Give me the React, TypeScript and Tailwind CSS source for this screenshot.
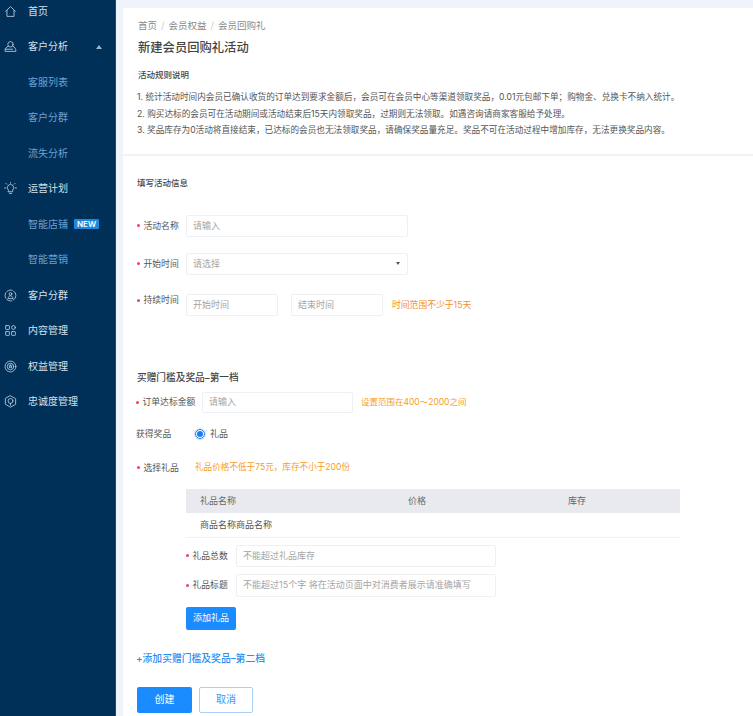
import type { ReactNode } from 'react'

const cjk = "font-['Inter','Noto_Sans_CJK_SC',sans-serif]"

function Icon({ children }: { children: ReactNode }) {
  return (
    <svg viewBox="0 0 24 24" fill="none" stroke="currentColor" strokeWidth="1.6" strokeLinejoin="round" strokeLinecap="round" className="w-[13px] h-[13px] shrink-0">
      {children}
    </svg>
  )
}

const HomeIcon = () => <Icon><path d="M3 11.5 12 3l9 8.5M5.5 10v11h13V10" /></Icon>
const UserIcon = () => <Icon><circle cx="12" cy="8" r="5" /><path d="M7.5 11.5C4 13 2 16 2 21h20c0-5-2-8-5.500-9.500" /><path d="M2 17h14" /></Icon>
const BulbIcon = () => <Icon><path d="M8 15a6 6 0 1 1 8 0v3H8zM10 21h4M12 2v-1M3 11H1M23 11h-2M5 4 3.500 2.500M19 4l1.500-1.500" /></Icon>
const GroupIcon = () => <Icon><circle cx="12" cy="12" r="10" strokeDasharray="10 3" /><circle cx="12" cy="9" r="2.500" /><path d="M7.500 17c.5-3 2.500-4.500 4.500-4.500s4 1.500 4.500 4.500z" /></Icon>
const GridIcon = () => <Icon><rect x="3" y="3" width="7" height="7" rx="1" /><circle cx="17.500" cy="6.500" r="3.500" /><rect x="3" y="14" width="7" height="7" rx="1" /><rect x="14" y="14" width="7" height="7" rx="1" /></Icon>
const StarIcon = () => <Icon><circle cx="12" cy="12" r="10" /><circle cx="12" cy="12" r="6" /><path d="m12 9 1 2h2l-1.500 1.500.5 2-2-1-2 1 .5-2L9 11h2z" /></Icon>
const ShieldIcon = () => <Icon><path d="M12 1.500 21.500 7v10L12 22.500 2.500 17V7z" /><circle cx="12" cy="11" r="4.500" /><path d="M12 15.500V19" /></Icon>

function NavItem({ icon, label, sub, children }: { icon?: ReactNode; label: string; sub?: boolean; children?: ReactNode }) {
  return (
    <div className={`flex items-center h-[35.5px] pl-[4px] text-[10px] ${sub ? 'text-[#6fa0cf]' : 'text-[#d5e1ec]'}`}>
      <span className="w-[24px] flex text-[#b9cbdc]">{icon}</span>
      <span>{label}</span>
      {children}
    </div>
  )
}

function Label({ text, required = true, className = 'w-[49px]' }: { text: string; required?: boolean; className?: string }) {
  return (
    <div className={`flex items-center shrink-0 text-[8.800px] text-[#555] ${className}`}>
      {required && <span className="w-[3px] h-[3px] rounded-full bg-[#f0405c] mr-[3.500px] shrink-0"></span>}
      <span>{text}</span>
    </div>
  )
}

function Field({ text, className, children }: { text: string; className: string; children?: ReactNode }) {
  return (
    <div className={`flex items-center justify-between pl-[6px] pr-[7px] bg-white border border-[#eef0f3] rounded-[2px] text-[#a5a5a5] ${className}`}>
      <span>{text}</span>
      {children}
    </div>
  )
}

const rules = [
  '1. 统计活动时间内会员已确认收货的订单达到要求金额后，会员可在会员中心等渠道领取奖品，0.01元包邮下单；购物金、兑换卡不纳入统计。',
  '2. 购买达标的会员可在活动期间或活动结束后15天内领取奖品，过期则无法领取。如遇咨询请商家客服给予处理。',
  '3. 奖品库存为0活动将直接结束，已达标的会员也无法领取奖品，请确保奖品量充足。奖品不可在活动过程中增加库存，无法更换奖品内容。',
]

export default function App() {
  return (
    <div className={`flex h-[716px] w-[753px] overflow-hidden bg-[#eff4fc] text-[9px] ${cjk}`}>
      {/* sidebar */}
      <aside className="w-[116px] shrink-0 bg-[#003058] border-r border-[#1b4a72]">
        <div className="-mt-[6.500px]">
          <NavItem icon={<HomeIcon />} label="首页" />
          <NavItem icon={<UserIcon />} label="客户分析">
            <span className="ml-[28px] w-0 h-0 border-x-[3px] border-x-transparent border-b-[4px] border-b-[#9fb6cb]"></span>
          </NavItem>
          <NavItem sub label="客服列表" />
          <NavItem sub label="客户分群" />
          <NavItem sub label="流失分析" />
          <NavItem icon={<BulbIcon />} label="运营计划" />
          <NavItem sub label="智能店铺">
            <span className="ml-[6px] px-[3px] h-[10px] leading-[10px] bg-[#1c89dc] rounded-[1px] text-white text-[8px] font-semibold">NEW</span>
          </NavItem>
          <NavItem sub label="智能营销" />
          <NavItem icon={<GroupIcon />} label="客户分群" />
          <NavItem icon={<GridIcon />} label="内容管理" />
          <NavItem icon={<StarIcon />} label="权益管理" />
          <NavItem icon={<ShieldIcon />} label="忠诚度管理" />
        </div>
      </aside>

      {/* main */}
      <main className="flex-1 mt-[8px] ml-[7px] bg-white">
        <section className="pl-[15px] pt-[12px] pb-[15px] border-b-2 border-[#f1f2f4]">
          <div className="flex items-center h-[12px] text-[9.500px] text-[#8a8a8a]">
            <span>首页</span><span className="mx-[4px] text-[#ccc]">/</span>
            <span>会员权益</span><span className="mx-[4px] text-[#ccc]">/</span>
            <span>会员回购礼</span>
          </div>
          <h1 className="mt-[7px] h-[18px] leading-[18px] text-[12.300px] font-medium text-[#444]">新建会员回购礼活动</h1>
          <h2 className="mt-[12px] h-[12px] leading-[12px] text-[8.500px] font-medium text-[#444]">活动规则说明</h2>
          <div className="mt-[8px] text-[8.650px] text-[#555] -ml-[1px]">
            {rules.map(r => (
              <p key={r} className="h-[16.500px] leading-[16.500px] whitespace-nowrap">{r}</p>
            ))}
          </div>
        </section>

        <form className="pl-[14px] pt-[21px]">
          <h2 className="h-[12px] leading-[12px] text-[8.500px] font-medium text-[#444]">填写活动信息</h2>

          <div className="mt-[26px] flex items-center">
            <Label text="活动名称" />
            <Field text="请输入" className="w-[222px] h-[22px]" />
          </div>
          <div className="mt-[16px] flex items-center">
            <Label text="开始时间" />
            <Field text="请选择" className="w-[222px] h-[22px]">
              <span className="w-0 h-0 border-x-[2.500px] border-x-transparent border-t-[3px] border-t-[#555]"></span>
            </Field>
          </div>
          <div className="mt-[19px] flex items-start">
            <Label text="持续时间" className="w-[49px] h-[13px]" />
            <Field text="开始时间" className="w-[92px] h-[22px]" />
            <Field text="结束时间" className="w-[92px] h-[22px] ml-[13px]" />
            <span className="ml-[9px] h-[22px] leading-[22px] text-[8.800px] text-[#f5902a]">时间范围不少于15天</span>
          </div>

          <h2 className="mt-[55px] h-[14px] leading-[14px] text-[9.700px] font-medium text-[#444]">买赠门槛及奖品–第一档</h2>
          <div className="mt-[7px] flex items-center -ml-[1px]">
            <Label text="订单达标金额" className="w-[66px]" />
            <Field text="请输入" className="w-[151px] h-[21px]" />
            <span className="ml-[8px] text-[8.500px] text-[#f79c25]">设置范围在400～2000之间</span>
          </div>
          <div className="mt-[14px] flex items-center h-[14px] -ml-[1px]">
            <Label text="获得奖品" required={false} className="w-[59px]" />
            <span className="w-[10px] h-[10px] rounded-full border border-[#1a7ff0] flex items-center justify-center shadow-[0_0_0_1px_#d3e6fd]">
              <span className="w-[6px] h-[6px] rounded-full bg-[#1a7ff0]"></span>
            </span>
            <span className="ml-[5px] text-[#555]">礼品</span>
          </div>
          <div className="mt-[20px] flex items-center h-[14px]">
            <Label text="选择礼品" className="w-[58px]" />
            <span className="text-[8.600px] text-[#f79c25]">礼品价格不低于75元，库存不小于200份</span>
          </div>

          <div className="mt-[14px] ml-[49px] w-[494px]">
            <div className="grid grid-cols-[208px_160px_1fr] items-center h-[24px] pl-[14px] bg-[#e9eaf0] text-[#666]">
              <span>礼品名称</span>
              <span>价格</span>
              <span>库存</span>
            </div>
            <div className="flex items-center h-[25px] pl-[14px] pt-[1px] border-b border-[#f0f1f3] text-[#555]">商品名称商品名称</div>

            <div className="mt-[7px] flex items-center">
              <Label text="礼品总数" className="w-[50px]" />
              <Field text="不能超过礼品库存" className="w-[260px] h-[22px]" />
            </div>
            <div className="mt-[7px] flex items-center">
              <Label text="礼品标题" className="w-[50px]" />
              <Field text="不能超过15个字 将在活动页面中对消费者展示请准确填写" className="w-[260px] h-[23px]" />
            </div>
            <button type="button" className="mt-[10px] flex items-center justify-center w-[50px] h-[23px] rounded-[2px] bg-[#1a8cff] text-white">添加礼品</button>
          </div>

          <div className="mt-[22px] h-[14px] leading-[14px] text-[9.800px] font-medium text-[#2a8ef5] -ml-[1px]">+添加买赠门槛及奖品–第二档</div>

          <div className="mt-[21px] flex gap-[7px]">
            <button type="button" className="w-[55px] h-[26px] rounded-[2px] bg-[#1a8cff] text-white text-[10px]">创建</button>
            <button type="button" className="w-[54px] h-[26px] rounded-[2px] border border-[#a9cff8] bg-white text-[#3d93f7] text-[10px]">取消</button>
          </div>
        </form>
      </main>
    </div>
  )
}
